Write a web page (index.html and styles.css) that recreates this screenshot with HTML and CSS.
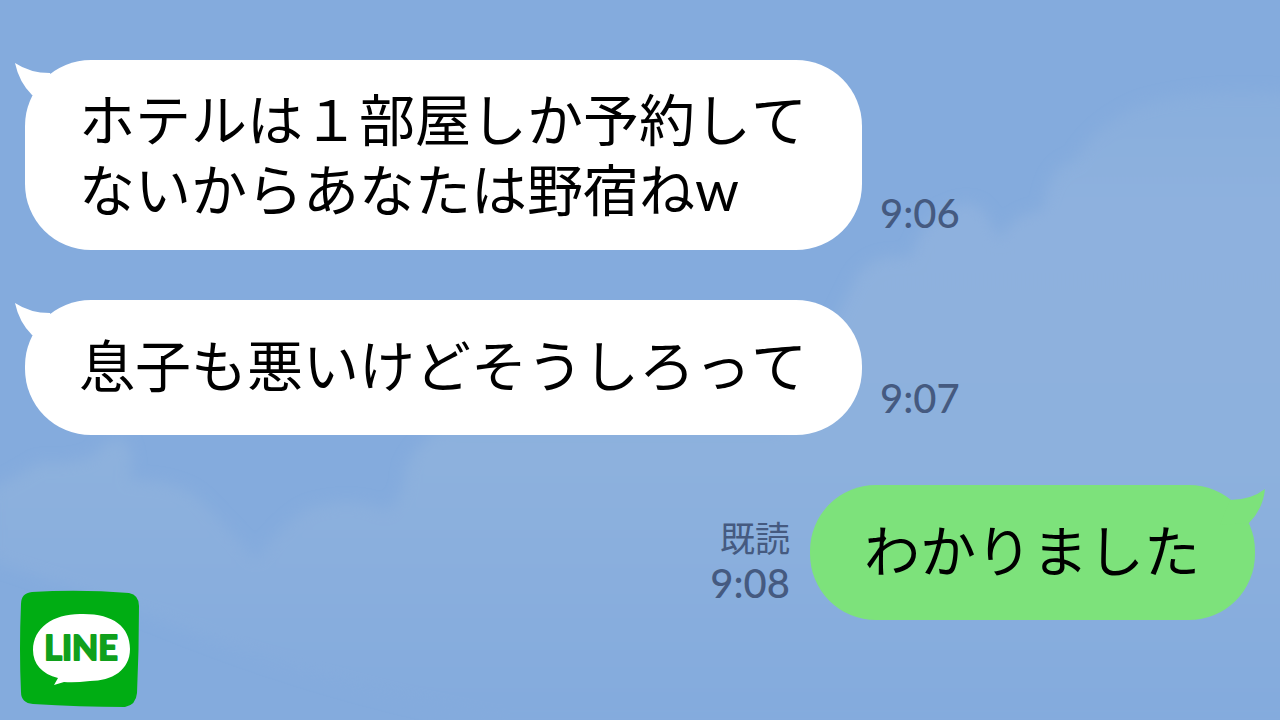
FILE: index.html
```html
<!DOCTYPE html>
<html lang="ja">
<head>
<meta charset="utf-8">
<title>LINE</title>
<link rel="stylesheet" href="styles.css">
</head>
<body>
<svg class="sky" viewBox="0 0 1280 720" preserveAspectRatio="none" aria-hidden="true">
  <defs>
    <filter id="soft" x="-10%" y="-10%" width="120%" height="120%"><feGaussianBlur stdDeviation="7"/></filter>
    <linearGradient id="cloud" gradientUnits="userSpaceOnUse" x1="0" y1="90" x2="0" y2="700">
      <stop offset="0" stop-color="#88aedd"/><stop offset=".2" stop-color="#8eb1de"/><stop offset=".6" stop-color="#8db1dd"/><stop offset=".8" stop-color="#89aedd"/><stop offset="1" stop-color="#84abdd"/>
    </linearGradient>
  </defs>
  <g filter="url(#soft)" fill="url(#cloud)">
    <path d="M-10 490Q20 475 40 462Q70 466 95 455Q108 435 125 440Q135 455 130 480Q185 480 205 505Q235 535 256 560Q285 520 310 508Q355 495 385 511Q405 500 405 470Q415 445 440 430H780L850 290Q865 250 910 258Q925 215 950 208Q975 195 988 218L1000 240Q1010 215 1043 210Q1048 165 1075 160Q1095 125 1140 105Q1200 85 1300 94V720H500Q330 690 160 620Q80 590 -10 560Z"/>
  </g>
</svg>
<main class="chat">
  <section class="message received">
    <div class="bubble two-line">
      <svg class="tail" viewBox="0 0 45 40" aria-hidden="true"><path d="M0 3Q15 13 35 13L45 40L17 35Q4 22 0 3Z"/></svg>
      <p>ホテルは１部屋しか予約して<br>ないからあなたは野宿ねw</p>
    </div>
    <div class="meta"><time>9:06</time></div>
  </section>
  <section class="message received">
    <div class="bubble">
      <svg class="tail" viewBox="0 0 45 40" aria-hidden="true"><path d="M0 3Q15 13 35 13L45 40L17 35Q4 22 0 3Z"/></svg>
      <p>息子も悪いけどそうしろって</p>
    </div>
    <div class="meta"><time>9:07</time></div>
  </section>
  <section class="message sent">
    <div class="meta"><span class="read">既読</span><time>9:08</time></div>
    <div class="bubble">
      <svg class="tail" viewBox="0 0 45 40" aria-hidden="true"><path d="M45 4Q31 15 10 15L0 40L29 38Q43 24 45 4Z"/></svg>
      <p>わかりました</p>
    </div>
  </section>
</main>
<svg class="logo" viewBox="0 0 120 118" role="img" aria-label="LINE">
  <path fill="#00ad13" d="M12 2Q60 -1 109 3Q119 5 119 16Q119 60 117 103Q116 115 105 117Q60 117 13 114Q1 113 1 102Q-1 60 1 14Q1 3 12 2Z"/>
  <path fill="#fff" d="M13 60C13 38 33 24 60 24C92 23 110 36 110 59C110 80 92 91 70 91Q54 93 44 92L34 95L38 88C22 84 13 74 13 60Z"/>
  <text class="logo-text" x="61" y="70" text-anchor="middle">LINE</text>
</svg>
</body>
</html>
```

FILE: styles.css
```css
* {
  box-sizing: border-box;
}

body {
  position: relative;
  min-height: 100vh;
  margin: 0;
  overflow: hidden;
  background: #84abdd;
  color: #000;
  font-family: Lato, "Noto Sans CJK JP", sans-serif;
  font-kerning: none;
}

.sky {
  position: absolute;
  inset: 0;
  width: 100%;
  height: 100%;
}

.chat {
  position: relative;
  display: flex;
  flex-direction: column;
  gap: 50px;
  padding: 60px 25px 100px;
}

.message {
  display: flex;
  align-items: flex-end;
  gap: 18px;
}

.sent {
  justify-content: flex-end;
  gap: 20px;
}

.bubble {
  position: relative;
  padding: 31px 55px 34px 54px;
  border-radius: 66px;
  background: #fff;
}

.two-line {
  padding-top: 25px;
  padding-bottom: 25px;
}

.sent .bubble {
  background: #7de27b;
}

.bubble p {
  margin: 0;
  font-size: 56px;
  line-height: 70px;
  white-space: nowrap;
}

.tail {
  position: absolute;
  top: 0;
  left: -10px;
  width: 45px;
  height: 40px;
  fill: #fff;
}

.sent .tail {
  right: -10px;
  left: auto;
  fill: #7de27b;
}

.meta {
  display: flex;
  flex-direction: column;
  align-items: flex-end;
  padding-bottom: 14px;
  color: #455a80;
  font-size: 40px;
  font-weight: 500;
  line-height: 45px;
}

.read {
  font-size: 35px;
  font-weight: 400;
}

.logo {
  position: absolute;
  bottom: 12px;
  left: 20px;
  width: 120px;
  height: 118px;
}

.logo-text {
  fill: #10a01c;
  stroke: #10a01c;
  stroke-width: 2px;
  stroke-linejoin: round;
  font: bold 34px Lato, sans-serif;
}
```
